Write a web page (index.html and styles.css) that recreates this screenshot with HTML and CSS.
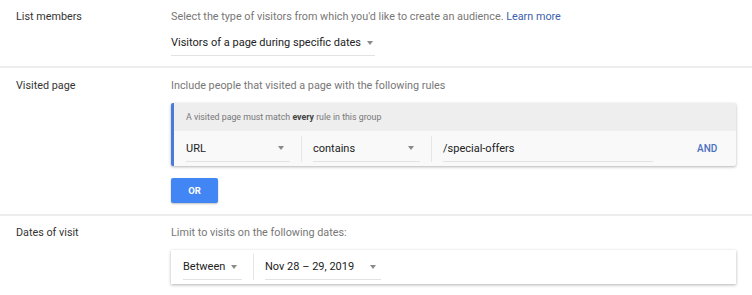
FILE: index.html
```html
<!DOCTYPE html>
<html>
<head>
    <meta charset="utf-8">
    <link rel="stylesheet" href="styles.css">
</head>
<body>
    <div class="section">
        <div class="label">List members</div>
        <div class="content">
            <p class="hint">Select the type of visitors from which you'd like to create an audience. <a href="#">Learn more</a></p>
            <div class="select select-members">
                <span>Visitors of a page during specific dates</span>
                <span class="caret"></span>
            </div>
        </div>
    </div>

    <div class="section">
        <div class="label">Visited page</div>
        <div class="content">
            <p class="hint">Include people that visited a page with the following rules</p>
            <div class="rule-group">
                <div class="group-header">A visited page must match <b>every</b> rule in this group</div>
                <div class="rule-row">
                    <div class="select select-field">
                        <span>URL</span>
                        <span class="caret"></span>
                    </div>
                    <div class="sep"></div>
                    <div class="select select-op">
                        <span>contains</span>
                        <span class="caret"></span>
                    </div>
                    <div class="sep"></div>
                    <div class="text-input">/special-offers</div>
                    <a class="and-link" href="#">AND</a>
                </div>
            </div>
            <button type="button" class="or-button">OR</button>
        </div>
    </div>

    <div class="section last">
        <div class="label">Dates of visit</div>
        <div class="content">
            <p class="hint">Limit to visits on the following dates:</p>
            <div class="date-card">
                <div class="select select-range">
                    <span>Between</span>
                    <span class="caret"></span>
                </div>
                <div class="sep"></div>
                <div class="select select-dates">
                    <span>Nov 28 – 29, 2019</span>
                    <span class="caret"></span>
                </div>
            </div>
        </div>
    </div>
</body>
</html>
```

FILE: styles.css
```css
body {
    margin: 0;
    font-family: Roboto, 'Liberation Sans', sans-serif;
    font-size: 11px;
    color: #212121;
    background-color: #fff;
}
.section {
    display: grid;
    grid-template-columns: 155px 1fr;
    padding: 10px 16px 10px 16px;
    border-bottom: 2px solid #ededed;
}
.section + .section {
    padding-top: 11px;
    padding-bottom: 11px;
}
.section.last {
    border-bottom: none;
    padding-top: 10px;
}
.label {
    line-height: 14px;
    font-size: 10.8px;
    color: #333;
}
.content {
    display: flex;
    flex-direction: column;
    align-items: flex-start;
}
.hint {
    margin: 0;
    line-height: 14px;
    font-size: 10.8px;
    color: #777;
}
.hint a {
    color: #3b5fae;
    text-decoration: none;
}
.select {
    display: flex;
    flex-shrink: 0;
    align-items: center;
    justify-content: space-between;
    height: 25px;
    white-space: nowrap;
    border-bottom: 1px solid #e3e3e3;
    color: #222;
}
.caret {
    width: 0;
    height: 0;
    margin-left: 6px;
    border-left: 3.5px solid transparent;
    border-right: 3.5px solid transparent;
    border-top: 4px solid #8a8a8a;
}
.select-members {
    margin-top: 6px;
    width: 204px;
}
.select-members .caret {
    margin-right: 5px;
}
.rule-group {
    width: 562px;
    margin-top: 10px;
    border-left: 3px solid #4a7bd8;
    border-radius: 2px;
    background-color: #f9f9f9;
    box-shadow: 0 1px 3px rgba(0, 0, 0, 0.3);
}
.group-header {
    height: 28px;
    line-height: 28px;
    padding-left: 12px;
    font-size: 8.8px;
    color: #777;
    background-color: #eeeeee;
}
.group-header b {
    color: #444;
}
.rule-row {
    display: flex;
    align-items: center;
    height: 35px;
    padding-left: 12px;
}
.sep {
    flex-shrink: 0;
    width: 1px;
    height: 26px;
    background-color: #e6e6e6;
    margin: 0 11px;
}
.select-field {
    width: 104px;
}
.select-field .caret,
.select-op .caret {
    margin-right: 6px;
}
.select-op {
    width: 107px;
}
.text-input {
    flex-shrink: 0;
    width: 210px;
    height: 25px;
    line-height: 25px;
    border-bottom: 1px solid #e3e3e3;
}
.and-link {
    margin-left: 44px;
    font-size: 10px;
    font-weight: 500;
    color: #4a6fc0;
    text-decoration: none;
}
.or-button {
    margin-top: 12px;
    width: 47px;
    height: 25px;
    border: none;
    border-radius: 2px;
    background-color: #4285f4;
    color: #fff;
    font-family: inherit;
    font-size: 9.5px;
    font-weight: 700;
    box-shadow: 0 1px 2px rgba(0, 0, 0, 0.25);
}
.date-card {
    display: flex;
    align-items: center;
    width: 553px;
    height: 34px;
    margin-top: 10px;
    padding-left: 12px;
    background-color: #fff;
    box-shadow: 0 1px 3px rgba(0, 0, 0, 0.3);
}
.select-range {
    width: 59px;
}
.select-range .caret {
    margin-right: 6px;
}
.select-dates {
    width: 116px;
}
.select-dates .caret {
    margin-right: 5px;
}
```
